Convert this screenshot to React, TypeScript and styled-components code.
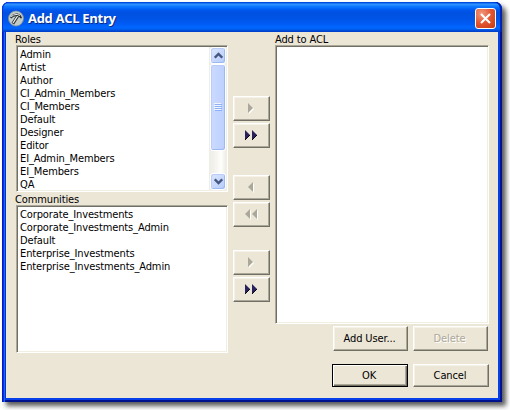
import React from 'react';
import styled, { createGlobalStyle, css } from 'styled-components';

const GlobalStyle = createGlobalStyle`
  body { margin: 0; background: #fff; overflow: hidden; }
  * { box-sizing: border-box; }
`;

const Stage = styled.div`
  width: 510px;
  height: 410px;
  padding: 2px 0 0 2px;
  overflow: hidden;
  font: 11px/13px 'DejaVu Sans Condensed', 'DejaVu Sans', sans-serif;
  font-stretch: condensed;
  letter-spacing: -0.12px;
  color: #000;
`;

const Dialog = styled.section`
  width: 500px;
  height: 400px;
  display: flex;
  flex-direction: column;
  padding: 0 4px 4px;
  border-radius: 7px 7px 0 0;
  background: #0831d9;
  box-shadow:
    inset 1px 0 #0019cf,
    inset 2px 0 #0831d9,
    inset 3px 0 #166aee,
    inset -2px 0 #00138c,
    inset 0 -2px #00138c,
    inset -4px 0 #0740e8,
    inset 0 -4px #0740e8,
    4px 4px 5px rgba(0, 0, 0, 0.65);
`;

const TitleBar = styled.header`
  height: 30px;
  flex: none;
  margin: 0 -4px;
  padding: 2px 6px 0 6px;
  display: flex;
  align-items: center;
  border-radius: 7px 7px 0 0;
  background: linear-gradient(#0040ce 0, #0058ee 1px, #3593ff 2px, #288eff 3px, #127dff 4px,
    #0369fc 6px, #0057ee 8px, #0050e0 11px, #0055e7 17px, #005bf5 22px, #0066ff 25px,
    #0062f5 27px, #0046d2 29px, #003dc4 30px);
  box-shadow: inset 1px 0 #0831d9, inset -2px 0 #0022b0;
`;

const Title = styled.h1`
  flex: 1;
  margin: 0 0 0 4px;
  font: bold 13px/16px 'Open Sans', 'Noto Sans', sans-serif;
  letter-spacing: -0.3px;
  color: #fff;
  text-shadow: 1px 1px #0b2a86;
`;

const CloseButton = styled.button`
  width: 21px;
  height: 21px;
  padding: 0;
  display: grid;
  place-items: center;
  border: 1px solid #fff;
  border-radius: 3px;
  background: radial-gradient(circle at 30% 25%, #f09a80 0, #e2552f 50%, #c63a10 100%);
`;

const Body = styled.main`
  flex: 1;
  display: flex;
  padding-left: 9px;
  background: #ece6d6;
`;

const LeftColumn = styled.div`
  width: 213px;
`;

const TransferColumn = styled.div`
  width: 47px;
  padding: 64px 0 0 5px;
`;

const RightColumn = styled.div`
  width: 214px;
`;

const Label = styled.div`
  height: 13px;
  line-height: 15px;
  white-space: nowrap;
`;

const ListBox = styled.div<{ $height: number; $indent?: number }>`
  height: ${p => p.$height}px;
  margin-left: ${p => p.$indent ?? 0}px;
  display: flex;
  overflow: hidden;
  background: #fff;
  border: 1px solid;
  border-color: #aca899 #fff #fff #aca899;
  box-shadow: inset 1px 1px #716f64, inset -1px -1px #f1efe2;
`;

const Items = styled.ul`
  flex: 1;
  margin: 1px 0 1px 1px;
  padding: 1px 0 0 2px;
  list-style: none;
  overflow: hidden;
`;

const Item = styled.li`
  height: 13px;
  white-space: nowrap;
`;

const ScrollTrack = styled.div`
  width: 17px;
  margin: 1px;
  display: flex;
  flex-direction: column;
  background: linear-gradient(90deg, #eeede5 0, #f3f1ec 5px, #fefefb 12px, #eeede5 17px);
`;

const scrollPart = css`
  margin-left: 1px;
  display: grid;
  place-items: center;
  border: 1px solid #fff;
  border-radius: 3px;
  box-shadow: inset -1px -1px #9db9f2, inset 1px 1px #b9ccfa;
`;

const ScrollArrow = styled.div`
  ${scrollPart}
  height: 17px;
  background: linear-gradient(135deg, #dce7ff, #b5cbfa);
`;

const ScrollThumb = styled.div`
  ${scrollPart}
  height: 87px;
  margin-bottom: auto;
  background: linear-gradient(90deg, #cbdaff, #bdd0fd);
`;

const Button = styled.button<{ $w: number; $h: number; $top?: number; $default?: boolean }>`
  width: ${p => p.$w}px;
  height: ${p => p.$h}px;
  margin: ${p => p.$top ?? 0}px 0 0;
  padding: 0;
  display: flex;
  align-items: center;
  justify-content: center;
  font: inherit;
  letter-spacing: inherit;
  color: #000;
  background: #ece6d6;
  border: 1px solid;
  border-color: #fff #716f64 #716f64 #fff;
  box-shadow: inset -1px -1px #aca899, inset 1px 1px #f6f2e8;
  &:disabled {
    color: #aca899;
    text-shadow: 1px 1px #fff;
  }
  ${p => p.$default && css`
    border-color: #000;
    box-shadow: inset 1px 1px #fff, inset -1px -1px #716f64, inset -2px -2px #aca899;
  `}
`;

const Caption = styled.span`
  margin-right: 2px;
`;

const ButtonRow = styled.div<{ $top: number; $left: number }>`
  display: flex;
  gap: 5px;
  margin: ${p => p.$top}px 0 0 ${p => p.$left}px;
`;

const HammerIcon = () => (
  <svg width="16" height="17" viewBox="0 0 16 17">
    <circle cx="8" cy="8.5" r="7.5" fill="#c3cbc8" stroke="#7d929c" strokeWidth=".8" />
    <path d="M4.8 13.6 9.8 6" stroke="#283033" strokeWidth="3" />
    <path d="M2 7.6 5 4.3 9.5 3.2l3.2 2 1.4 2.9-1.4.3-1.6-1.7-2.5-.4-3.2.5-2 1.8z" fill="#283033" />
    <path d="M5 13 9.6 6" stroke="#f2f5f1" strokeWidth="1.3" />
    <path d="m3.2 6.8 2.2-1.7 3.9-.8 2.5 1.3" fill="none" stroke="#f4f6f1" strokeWidth="1" />
  </svg>
);

const CloseIcon = () => (
  <svg width="13" height="13" viewBox="0 0 13 13">
    <path d="m2 2 9 9M11 2l-9 9" stroke="#fff" strokeWidth="2.1" />
  </svg>
);

const Chevron = ({ down = false }: { down?: boolean }) => (
  <svg width="9" height="7" viewBox="0 0 9 7">
    <path d={down ? 'm.8 1.3 3.7 3.7 3.7-3.7' : 'm.8 5.7 3.7-3.7 3.7 3.7'} fill="none" stroke="#465882" strokeWidth="2.4" />
  </svg>
);

const Grip = () => (
  <svg width="8" height="9" viewBox="0 0 8 9" shapeRendering="crispEdges">
    <path d="M0 .5h7M0 2.5h7M0 4.5h7M0 6.5h7" stroke="#f2f6ff" />
    <path d="M1 1.5h7M1 3.5h7M1 5.5h7M1 7.5h7" stroke="#8cb0f8" />
  </svg>
);

type Direction = 'right' | 'left';

const Arrow = ({ dir, double, off }: { dir: Direction; double?: boolean; off?: boolean }) => {
  const shape = dir === 'right' ? 'M0 0v10l5-5z' : 'M5 0v10l-5-5z';
  const starts = double ? [0, 7] : [3];
  return (
    <svg width="14" height="11" viewBox="0 0 14 11">
      {off && starts.map(x => <path key={x} d={shape} transform={`translate(${x + 1} 1)`} fill="#fff" />)}
      {starts.map(x => <path key={x} d={shape} transform={`translate(${x} 0)`} fill={off ? '#aca899' : '#28215c'} />)}
      {!off && starts.map(x => <path key={x} d="m0 10 5-5" transform={`translate(${x} 0)`} stroke="#080812" />)}
    </svg>
  );
};

const transfers: { dir: Direction; double?: boolean; off?: boolean; top: number; name: string }[] = [
  { dir: 'right', off: true, top: 0, name: 'Add role' },
  { dir: 'right', double: true, top: 2, name: 'Add all roles' },
  { dir: 'left', off: true, top: 27, name: 'Remove entry' },
  { dir: 'left', double: true, off: true, top: 2, name: 'Remove all entries' },
  { dir: 'right', off: true, top: 23, name: 'Add community' },
  { dir: 'right', double: true, top: 2, name: 'Add all communities' },
];

const roles = ['Admin', 'Artist', 'Author', 'CI_Admin_Members', 'CI_Members', 'Default', 'Designer', 'Editor', 'EI_Admin_Members', 'EI_Members', 'QA'];
const communities = ['Corporate_Investments', 'Corporate_Investments_Admin', 'Default', 'Enterprise_Investments', 'Enterprise_Investments_Admin'];

export default function App() {
  return (
    <Stage>
      <GlobalStyle />
      <Dialog>
        <TitleBar>
          <HammerIcon />
          <Title>Add ACL Entry</Title>
          <CloseButton aria-label="Close"><CloseIcon /></CloseButton>
        </TitleBar>
        <Body>
          <LeftColumn>
            <Label>Roles</Label>
            <ListBox $height={147} $indent={1}>
              <Items>{roles.map(r => <Item key={r}>{r}</Item>)}</Items>
              <ScrollTrack>
                <ScrollArrow><Chevron /></ScrollArrow>
                <ScrollThumb><Grip /></ScrollThumb>
                <ScrollArrow><Chevron down /></ScrollArrow>
              </ScrollTrack>
            </ListBox>
            <Label>Communities</Label>
            <ListBox $height={148} $indent={1}>
              <Items>{communities.map(c => <Item key={c}>{c}</Item>)}</Items>
            </ListBox>
          </LeftColumn>
          <TransferColumn>
            {transfers.map(t => (
              <Button key={t.name} $w={37} $h={25} $top={t.top} disabled={t.off} aria-label={t.name}>
                <Arrow dir={t.dir} double={t.double} off={t.off} />
              </Button>
            ))}
          </TransferColumn>
          <RightColumn>
            <Label>Add to ACL</Label>
            <ListBox $height={279}><Items /></ListBox>
            <ButtonRow $top={2} $left={58}>
              <Button $w={75} $h={25}><Caption>Add User...</Caption></Button>
              <Button $w={75} $h={25} disabled><Caption>Delete</Caption></Button>
            </ButtonRow>
            <ButtonRow $top={13} $left={57}>
              <Button $w={76} $h={23} $default><Caption>OK</Caption></Button>
              <Button $w={76} $h={23}><Caption>Cancel</Caption></Button>
            </ButtonRow>
          </RightColumn>
        </Body>
      </Dialog>
    </Stage>
  );
}
